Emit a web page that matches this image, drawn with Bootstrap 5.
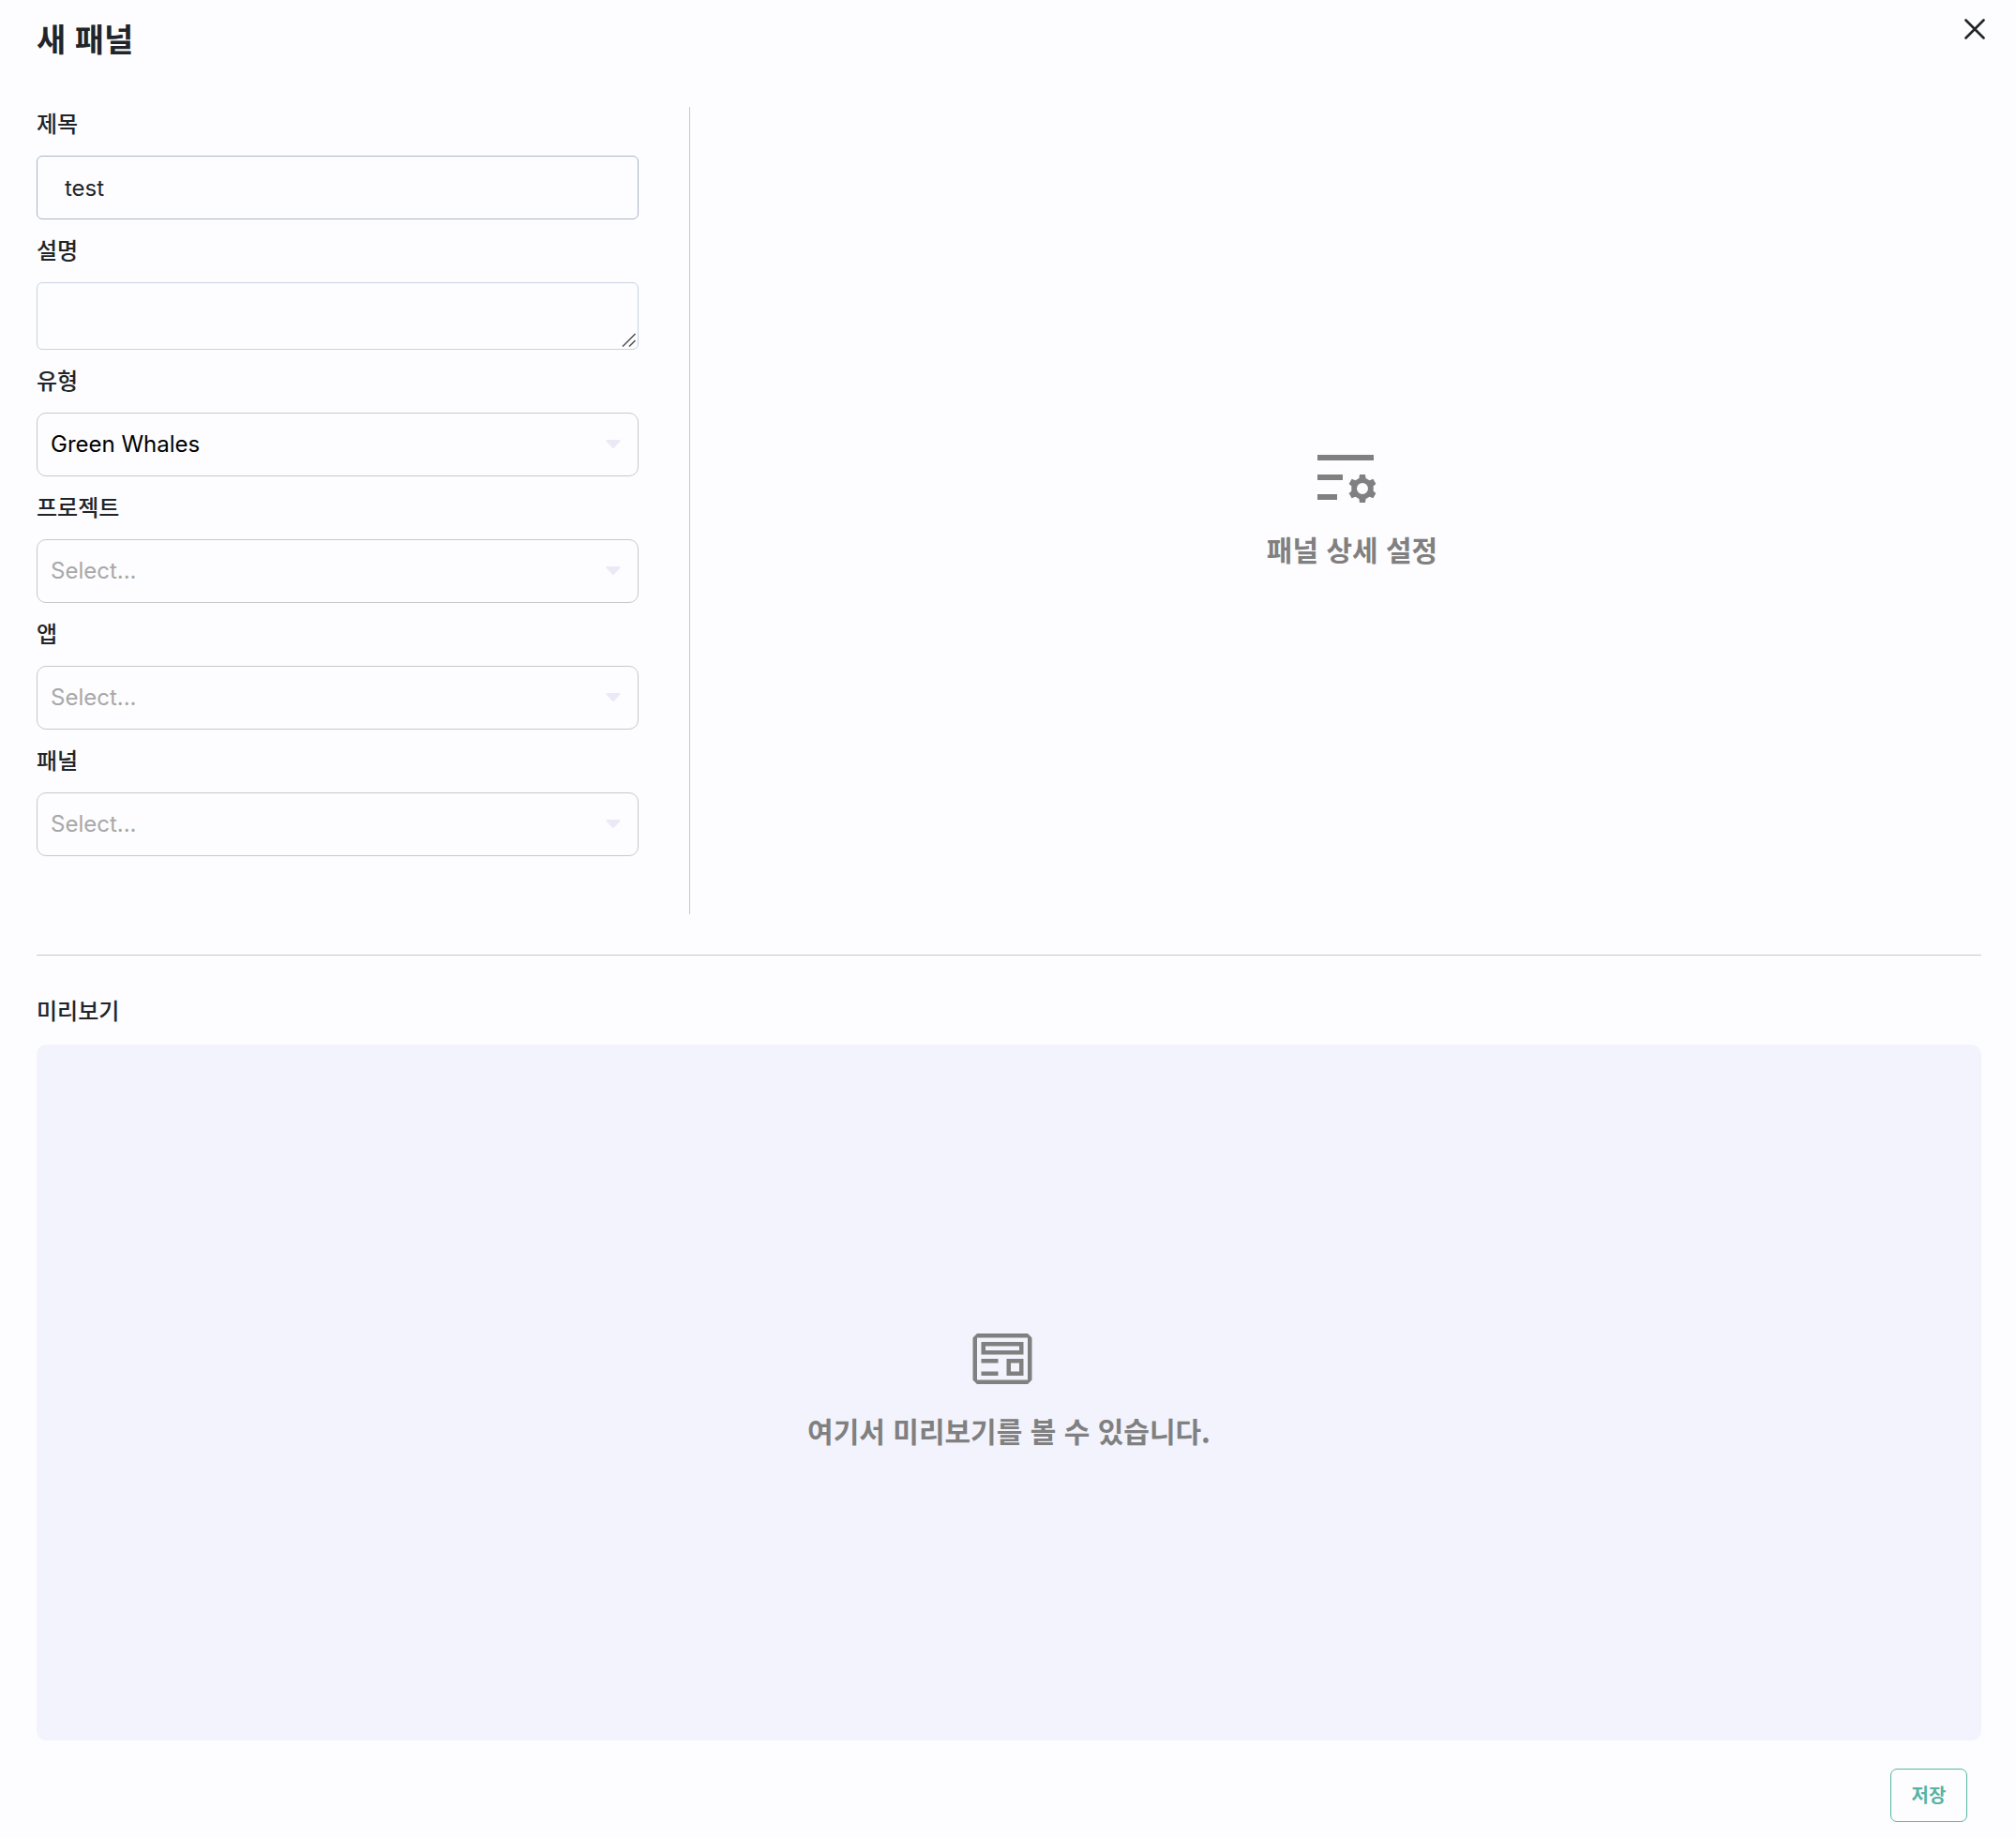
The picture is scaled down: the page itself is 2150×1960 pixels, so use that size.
<!DOCTYPE html>
<html lang="ko">
<head>
<meta charset="utf-8">
<meta name="viewport" content="width=device-width, initial-scale=1">
<title>새 패널</title>
<link rel="stylesheet" href="https://cdn.jsdelivr.net/npm/bootstrap@5.3.0/dist/css/bootstrap.min.css">
<style>
  body { background: #fdfdff; color: #212529; font-family: "Noto Sans CJK KR", sans-serif; font-size: 24px; line-height: 34px; }
  .page { padding: 18px 37px 17px 39px; }
  .page-title { font-size: 34px; line-height: 46px; font-weight: 700; }
  .close-btn { margin: 2px -4px 0 0; line-height: 0; color: #212529; }
  .editor { margin-top: 50px; height: 861px; }
  .form-side { width: 697px; max-width: 100%; padding-right: 54px; border-right: 1px solid #c8c8cb; }
  .field + .field { margin-top: 15px; }
  .field-label { display: block; margin-bottom: 18px; font-weight: 500; }
  .control { background-color: transparent; font-family: Inter, "Noto Sans CJK KR", sans-serif; font-size: 24px; line-height: 36px; height: 68px; border: 1px solid #c8d3e0; border-radius: 6px; color: #212529; }
  .control:focus { background-color: transparent; }
  .text-control { padding: 0 29px; border-color: #a9b4c6; }
  textarea.control { height: 72px; resize: none; padding: 10px 29px; display: block; }
  .grip { position: absolute; right: 2px; bottom: 2px; color: #555; pointer-events: none; }
  select.control { padding: 0 48px 0 14px; border-color: #c8c8cb; border-radius: 10px; color: #000;
    background-image: url("data:image/svg+xml,%3Csvg xmlns='http://www.w3.org/2000/svg' viewBox='0 0 16 10'%3E%3Cpath d='M1.5 1h13L8 8z' fill='%23eae9f5' stroke='%23eae9f5' stroke-width='2' stroke-linejoin='round'/%3E%3C/svg%3E");
    background-size: 16px 10px; background-position: right 18px center; }
  select.control.is-empty { color: #a8a8a8; }
  .detail-side { margin-right: -35px; }
  .empty-note { color: #808080; font-size: 30px; line-height: 48px; font-weight: 700; padding-bottom: 8px; }
  .empty-note svg { margin: 0 14px 16px 0; }
  .divider { margin: 43px 0 0; border-top: 1px solid #c8c8cb; opacity: 1; }
  .preview-title { margin: 41px 0 20px; font-size: 24px; line-height: 34px; font-weight: 500; }
  .preview { background: #f3f3fd; border-radius: 10px; }
  .save-btn { margin: 30px 15px 0 0; width: 82px; height: 57px; padding: 0 0 2px; font-size: 20px; line-height: 30px; font-weight: 700; color: #54b4a6; border: 1px solid #54b4a6; border-radius: 7px; }
</style>
</head>
<body>
<main class="page d-flex flex-column min-vh-100">
  <header class="d-flex justify-content-between align-items-start">
    <h1 class="page-title mb-0">새 패널</h1>
    <button type="button" class="close-btn btn p-0 border-0" aria-label="닫기">
      <svg width="22" height="22" viewBox="0 0 22 22" fill="none" stroke="currentColor" stroke-width="2.6" stroke-linecap="round"><path d="M1.5 1.5l19 19M20.5 1.5l-19 19"/></svg>
    </button>
  </header>

  <section class="editor d-flex">
    <form class="form-side flex-shrink-0">
      <div class="field">
        <label class="field-label" for="title">제목</label>
        <input class="form-control control text-control" id="title" type="text" value="test">
      </div>
      <div class="field">
        <label class="field-label" for="desc">설명</label>
        <div class="position-relative">
          <textarea class="form-control control" id="desc"></textarea>
          <svg class="grip" width="16" height="16" viewBox="0 0 16 16" fill="none" stroke="currentColor" stroke-width="1.6"><path d="M1 14.5L14.5 1M8 14.5L14.5 8"/></svg>
        </div>
      </div>
      <div class="field">
        <label class="field-label" for="type">유형</label>
        <select class="form-select control" id="type"><option>Green Whales</option></select>
      </div>
      <div class="field">
        <label class="field-label" for="project">프로젝트</label>
        <select class="form-select control is-empty" id="project"><option>Select...</option></select>
      </div>
      <div class="field">
        <label class="field-label" for="app">앱</label>
        <select class="form-select control is-empty" id="app"><option>Select...</option></select>
      </div>
      <div class="field">
        <label class="field-label" for="panel">패널</label>
        <select class="form-select control is-empty" id="panel"><option>Select...</option></select>
      </div>
    </form>
    <div class="detail-side flex-grow-1 d-flex align-items-center justify-content-center">
      <div class="empty-note d-flex flex-column align-items-center">
        <svg width="72" height="72" viewBox="0 0 24 24" fill="currentColor"><path d="M2 4h20v2H2zM2 11h9v2H2zM2 18h7v2H2z"/><path fill-rule="evenodd" d="M17 11L19 11L19.2 12.3L20.5 13.1L21.8 12.6L22.8 14.3L21.9 15.1L21.9 16.9L22.8 17.7L21.8 19.4L20.5 18.9L19.2 19.7L19 21L17 21L16.8 19.7L15.5 18.9L14.2 19.4L13.2 17.7L14.1 16.9L14.1 15.1L13.2 14.3L14.2 12.6L15.5 13.1L16.8 12.3zM18 14a2 2 0 100 4 2 2 0 000-4z"/></svg>
        <span>패널 상세 설정</span>
      </div>
    </div>
  </section>

  <hr class="divider">

  <h2 class="preview-title">미리보기</h2>
  <section class="preview flex-grow-1 d-flex align-items-center justify-content-center">
    <div class="empty-note d-flex flex-column align-items-center">
      <svg width="72" height="72" viewBox="0 0 16 16" fill="currentColor"><path fill-rule="evenodd" d="M2 2h12l1 1v10l-1 1H2l-1-1V3l1-1zm0 11h12V3H2v10zm11-9H3v3h10V4zm-1 2H4V5h8v1zm-3 6h4V8H9v4zm1-3h2v2h-2V9zM7 8H3v1h4V8zm-4 3h4v1H3v-1z"/></svg>
      <span>여기서 미리보기를 볼 수 있습니다.</span>
    </div>
  </section>
  <div class="d-flex justify-content-end">
    <button type="button" class="btn save-btn">저장</button>
  </div>
</main>
<script src="https://cdn.jsdelivr.net/npm/bootstrap@5.3.0/dist/js/bootstrap.bundle.min.js"></script>
</body>
</html>
